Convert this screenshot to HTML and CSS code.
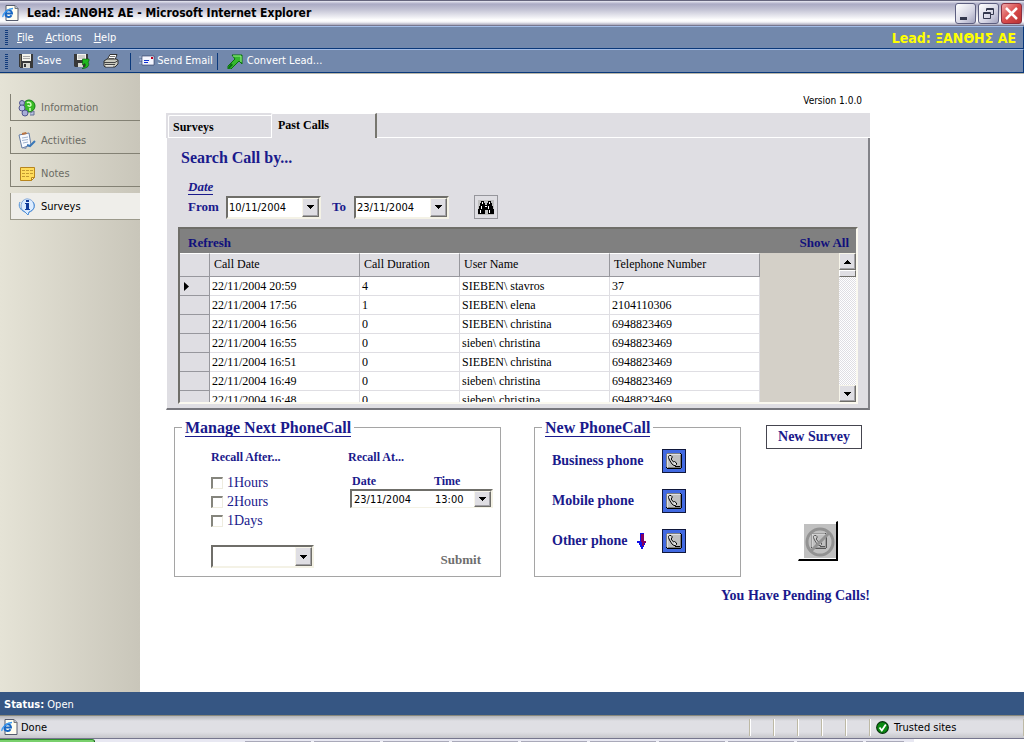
FILE: index.html
```html
<!DOCTYPE html>
<html lang="en">
<head>
<meta charset="utf-8">
<title>Lead: ΞΑΝΘΗΣ ΑΕ</title>
<link rel="stylesheet" href="styles.css">
</head>
<body>
<svg class="defs" aria-hidden="true">
  <symbol id="down" viewBox="0 0 7 4"><path d="M0 0h7v1H0zM1 1h5v1H1zM2 2h3v1H2zM3 3h1v1H3z"/></symbol>
  <symbol id="up" viewBox="0 0 7 4"><path d="M3 0h1v1H3zM2 1h3v1H2zM1 2h5v1H1zM0 3h7v1H0z"/></symbol>
  <symbol id="page-e" viewBox="0 0 17 17">
    <path d="M4 .5h9l3 3v12H4z" fill="#fffdf0" stroke="#555b6e"/><path d="M13 .5v3h3" fill="#b8c4dc" stroke="#777"/>
    <path d="M3.500 8.500h6.500a3.200 3.200 0 0 0-6.500 0 3.200 3.200 0 0 0 6 1.800" fill="none" stroke="#1766c4" stroke-width="2"/>
    <path d="M1 12C0 9 6 3.500 11 3.500" fill="none" stroke="#3d9af0" stroke-width="1.300"/>
  </symbol>
  <symbol id="phone" viewBox="0 0 16 16">
    <path d="M1 0h14v1h1v14h-1v1H1v-1H0V1h1z"/><path d="M1 1h14v14H1z" fill="#c0c0c0"/>
    <path d="M1 14V1h13" fill="none" stroke="#fff"/><path d="M2 14.500h12.500V2" fill="none" stroke="#808080"/>
    <path d="M3.500 2.500h1.500l1 1v1.500l-1 1 2.500 3 1-.5 2 1.500v1.500l-1 1H8l-2-1.500-2.500-4-1-2.500v-1zM9 13.500h5" fill="#ddd" stroke="#000"/>
  </symbol>
</svg>
<div class="window">
  <header class="titlebar">
    <svg class="app-icon" width="17" height="17"><use href="#page-e"/></svg>
    <h1>Lead: ΞΑΝΘΗΣ ΑΕ - Microsoft Internet Explorer</h1>
    <div class="caption-buttons">
      <button class="cap" aria-label="Minimize"><svg width="19" height="19"><path d="M4 13h7v3H4z" fill="#34384e"/></svg></button>
      <button class="cap" aria-label="Restore"><svg width="19" height="19" fill="none" stroke="#34384e"><path d="M7.500 7V4.500h7v6H12M7 5.500h8"/><path d="M4.500 8.500h7v6h-7zM4 9.500h8"/></svg></button>
      <button class="cap close" aria-label="Close"><svg width="19" height="19"><path d="M4 4l11 11M15 4L4 15" stroke="#fff" stroke-width="2.500"/></svg></button>
    </div>
  </header>
  <nav class="bar menubar">
    <span class="grip"></span>
    <a href="#"><u>F</u>ile</a><a href="#"><u>A</u>ctions</a><a href="#"><u>H</u>elp</a>
    <strong class="lead">Lead: ΞΑΝΘΗΣ ΑΕ</strong>
  </nav>
  <div class="bar toolbar">
    <span class="grip"></span>
    <button class="tool save"><svg width="14" height="14" shape-rendering="crispEdges"><path d="M0 0h14v14H1l-1-1z" fill="#383838"/><path d="M3 0h9v7H3z" fill="#f4f4ec"/><path d="M4 2h7v1H4zM4 4h7v1H4z" fill="#aaa"/><path d="M4 9h7v5H4z" fill="#d8d8d0"/><path d="M5 10h2v3H5z" fill="#333"/><path d="M1 1h1v12H1z" fill="#77705a"/></svg>Save</button>
    <button class="tool" aria-label="Save and close"><svg width="16" height="15"><path d="M0 0h14v13H1l-1-1z" fill="#383838"/><path d="M3 0h9v6H3z" fill="#f4f4ec"/><path d="M4 2h7M4 4h7" stroke="#aaa"/><path d="M4 9h5v4H4z" fill="#d8d8d0"/><path d="M8 14.500c3-1 4-3 3-5L8.500 11V5H15v2l-1 1c2 3 0 6.500-6 6.500z" fill="#20b820" stroke="#075b07" stroke-width=".6"/></svg></button>
    <button class="tool print" aria-label="Print"><svg width="16" height="14"><path d="M4 6l3-5.500h7L12 6z" fill="#fff" stroke="#333"/><path d="M7 2.500h5M6 4.500h5" stroke="#777"/><path d="M1 7l3-2h9l2 1v4l-3 3H2l-1-1z" fill="#c9c9bd" stroke="#333"/><path d="M1 8.500h11l3-2M2 10.500h10" stroke="#444" fill="none"/><path d="M3 12h7" stroke="#fff"/></svg></button>
    <span class="sep"></span>
    <button class="tool mail"><svg width="16" height="12"><path d="M0 2h3M1 5h2M0 8h3" stroke="#b9c7e3"/><path d="M3 1h12v9H3z" fill="#f4f6ff" stroke="#26345c" stroke-width=".6"/><path d="M5 5.500h5M5 7.500h4" stroke="#1030d0"/><path d="M12 2h2v2h-2z" fill="#c00020"/></svg>Send Email</button>
    <span class="sep"></span>
    <button class="tool convert"><svg width="16" height="15"><path d="M5 1h10v9l-3-3-8 8H1v-3l7-7z" fill="#35b82f" stroke="#08700c"/><path d="M6 2h8v6" fill="none" stroke="#9af28c"/><path d="M1 14l3-5 2 2-4 4z" fill="#087010"/></svg>Convert Lead...</button>
  </div>
  <div class="body">
    <nav class="side">
      <a href="#"><svg width="18" height="18"><circle cx="11" cy="7" r="6" fill="#38bb25" stroke="#147d18"/><path d="M9 4c1-1 4-1 4 2-1 2-3 1-3 0M12 9v3" fill="none" stroke="#d4ffc0" stroke-width="1.500"/><path d="M12 14l4-2v4h-4" fill="#b9c3df" stroke="#657094"/><circle cx="4" cy="4" r="2.500" fill="#a7add8" stroke="#51558d"/><circle cx="4" cy="9" r="3" fill="#b9bfe8" stroke="#51558d"/><circle cx="7" cy="14" r="3" fill="#a7add8" stroke="#51558d"/></svg>Information</a>
      <a href="#"><svg width="18" height="18"><path d="M1 3l10-2 2 12-9 3z" fill="#f7faff" stroke="#667da5"/><path d="M4 1l4-1 1 2-5 1z" fill="#b97544"/><path d="M4 6l6-1M4 8.500l6-1M5 11l5-1" stroke="#9fb2ce"/><path d="M9 13l3 1 5-5" fill="none" stroke="#3b78b8" stroke-width="2"/><path d="M4 16l4 1 1-2" fill="#8293b5"/></svg>Activities</a>
      <a href="#"><svg width="18" height="18"><path d="M2.500 2.500h14v10l-3 3h-11z" fill="#ffdc5b" stroke="#b7851e"/><path d="M4 5.500h11M4 8.500h11M4 11.500h8" stroke="#c39a31" stroke-dasharray="3 1"/><path d="M13.500 15.500v-3h3z" fill="#fff2a8" stroke="#b7851e"/></svg>Notes</a>
      <a href="#" class="current"><svg width="18" height="18"><path d="M9 .8a8 7 0 0 1 2 13.500L10 17l-3-3A7 7 0 0 1 9 .8z" fill="#dcecff" stroke="#87aada"/><path d="M2 4c-2 4 0 8 5 10l3 3 1-3c5-2 7-6 4-10" fill="none" stroke="#4d8fd8"/><path d="M8 2h3v2H8zM7 5h4v6h1v1H7v-1h1V6H7z" fill="#123b9a"/></svg>Surveys</a>
    </nav>
    <main>
      <p class="version">Version 1.0.0</p>
      <div class="tabs" role="tablist">
        <button role="tab" class="tab">Surveys</button>
        <button role="tab" class="tab active" aria-selected="true">Past Calls</button>
        <span class="tab-rest"></span>
      </div>
      <section class="page">
        <h2>Search Call by...</h2>
        <p class="date-title"><span>Date</span></p>
        <div class="search">
          <label for="from">From</label>
          <span class="combo"><input id="from" value="10/11/2004"><button class="drop" aria-label="Pick start date"><svg width="7" height="4"><use href="#down"/></svg></button></span>
          <label for="to" class="to">To</label>
          <span class="combo"><input id="to" value="23/11/2004"><button class="drop" aria-label="Pick end date"><svg width="7" height="4"><use href="#down"/></svg></button></span>
          <button class="find" aria-label="Search"><svg width="16" height="15" shape-rendering="crispEdges"><path d="M0 0h16v15H0z" fill="#c0c0c0"/><path d="M3 1h3v2h1v2h2V3h1V1h3v2h1v3h1v3h1v5h-6v-4H7v4H0V9h1V6h1V3h1z"/><path d="M4 2h1v2H4zM11 2h1v2h-1zM3 6h1v3H3zM2 10h1v3H2zM10 6h1v3h-1zM11 10h1v3h-1zM7 6h2v1H7z" fill="#fff"/></svg></button>
        </div>
        <div class="grid-frame">
          <div class="grid-caption"><button>Refresh</button><button>Show All</button></div>
          <div class="grid-body">
            <div class="grid-view">
            <table>
              <colgroup><col class="c-mark"><col class="c-date"><col class="c-dur"><col class="c-date"><col class="c-date"></colgroup>
              <thead><tr><th aria-label="Row"></th><th>Call Date</th><th>Call Duration</th><th>User Name</th><th>Telephone Number</th></tr></thead>
              <tbody>
                <tr><th><svg width="5" height="9"><path d="M0 0l5 4.500L0 9z"/></svg></th><td>22/11/2004 20:59</td><td>4</td><td>SIEBEN\ stavros</td><td>37</td></tr>
                <tr><th></th><td>22/11/2004 17:56</td><td>1</td><td>SIEBEN\ elena</td><td>2104110306</td></tr>
                <tr><th></th><td>22/11/2004 16:56</td><td>0</td><td>SIEBEN\ christina</td><td>6948823469</td></tr>
                <tr><th></th><td>22/11/2004 16:55</td><td>0</td><td>sieben\ christina</td><td>6948823469</td></tr>
                <tr><th></th><td>22/11/2004 16:51</td><td>0</td><td>SIEBEN\ christina</td><td>6948823469</td></tr>
                <tr><th></th><td>22/11/2004 16:49</td><td>0</td><td>sieben\ christina</td><td>6948823469</td></tr>
                <tr><th></th><td>22/11/2004 16:48</td><td>0</td><td>sieben\ christina</td><td>6948823469</td></tr>
              </tbody>
            </table>
            </div>
            <div class="scroll">
              <button class="drop" aria-label="Scroll up"><svg width="7" height="4"><use href="#up"/></svg></button>
              <span class="thumb"></span>
              <button class="drop last" aria-label="Scroll down"><svg width="7" height="4"><use href="#down"/></svg></button>
            </div>
          </div>
        </div>
      </section>
      <div class="lower">
        <fieldset class="manage">
          <legend><span>Manage Next PhoneCall</span></legend>
          <div class="after">
            <h3>Recall After...</h3>
            <label><input type="checkbox">1Hours</label>
            <label><input type="checkbox">2Hours</label>
            <label><input type="checkbox">1Days</label>
            <span class="combo choice"><select aria-label="Recall interval"><option></option></select><span class="drop"><svg width="7" height="4"><use href="#down"/></svg></span></span>
          </div>
          <div class="at">
            <h3>Recall At...</h3>
            <div class="at-labels"><label for="rdate">Date</label><label for="rtime">Time</label></div>
            <span class="combo when"><input id="rdate" value="23/11/2004"><input id="rtime" value="13:00"><button class="drop" aria-label="Pick recall date"><svg width="7" height="4"><use href="#down"/></svg></button></span>
            <button class="submit">Submit</button>
          </div>
        </fieldset>
        <fieldset class="phones">
          <legend><span>New PhoneCall</span></legend>
          <div class="phone-row"><span>Business phone</span><button class="dial" aria-label="Call business phone"><svg width="16" height="16"><use href="#phone"/></svg></button></div>
          <div class="phone-row"><span>Mobile phone</span><button class="dial" aria-label="Call mobile phone"><svg width="16" height="16"><use href="#phone"/></svg></button></div>
          <div class="phone-row"><span>Other phone</span><svg class="arrow" width="9" height="16" shape-rendering="crispEdges"><path d="M3 0h4v8h2v2H8v2H7v2H6v2H4v-2H3v-2H2v-2H0V8h3z" fill="#1010e8"/><path d="M4 1h3v7h2v2H7v3H5V9H4z" fill="#850060"/></svg><button class="dial" aria-label="Call other phone"><svg width="16" height="16"><use href="#phone"/></svg></button></div>
        </fieldset>
        <div class="actions">
          <button class="new-survey">New Survey</button>
          <button class="hangup" aria-label="End call"><svg width="32" height="34"><path d="M0 0h32v34H0z" fill="#c0c0c0"/><g opacity=".55"><use href="#phone" x="7" y="9" width="16" height="16"/></g><circle cx="16" cy="18" r="13" fill="none" stroke="#929292" stroke-width="3"/><path d="M25 9L7 27" stroke="#929292" stroke-width="3"/></svg></button>
        </div>
      </div>
      <p class="pending">You Have Pending Calls!</p>
    </main>
  </div>
  <div class="status"><b>Status:</b> Open</div>
  <footer class="ie-status">
    <svg width="17" height="17"><use href="#page-e"/></svg><span class="done">Done</span>
    <span class="pane"></span><span class="pane"></span><span class="pane"></span><span class="pane"></span><span class="pane"></span>
    <span class="pane zone"><svg width="13" height="13"><circle cx="6.500" cy="6.500" r="5.800" fill="#0b8a12" stroke="#03330a" stroke-width="1.200"/><path d="M3.500 6.500l2.300 3 4-6" fill="none" stroke="#fff" stroke-width="1.800"/></svg>Trusted sites</span>
  </footer>
  <div class="taskbar"><span class="start"></span><span class="tasks"></span><span class="desk"></span></div>
</div>
</body>
</html>
```
FILE: styles.css
```css
* { box-sizing: border-box; }
body { margin: 0; font: 11px/14px "DejaVu Sans Condensed", "DejaVu Sans", sans-serif; color: #000; background: #fff; }
p, h1, h2, h3 { margin: 0; }
button { font: inherit; color: inherit; background: none; border: 0; padding: 0; display: flex; align-items: center; justify-content: center; }
input, select { font: inherit; color: inherit; background: none; border: 0; padding: 0; margin: 0; min-width: 0; outline: 0; }
a { color: inherit; text-decoration: none; }
svg { flex: none; display: block; }
.defs { position: absolute; width: 0; height: 0; }
.window { display: flex; flex-direction: column; min-height: 100vh; }

/* Window caption */
.titlebar { display: flex; align-items: center; height: 26px; padding: 0 2px; border-top: 1px solid #65657d; border-bottom: 1px solid #77778f; background: linear-gradient(#e9e9f3 0, #aaaac4 3px, #c5c5d6 9px, #fff 19px, #f4f4f8 21px, #a8a8bc 24px); }
.titlebar h1 { margin-left: 8px; font: bold 12px/16px "DejaVu Sans Condensed", "DejaVu Sans", sans-serif; }
.caption-buttons { display: flex; gap: 2px; margin-left: auto; }
.cap { width: 21px; height: 21px; border: 1px solid #5d5f80; border-radius: 3px; background: linear-gradient(135deg, #fff, #d5d5e4 60%, #a2a3be); }
.close { border-color: #8d3040; background: linear-gradient(135deg, #f0a8a8, #d94c4c 50%, #b83434); }

/* Menu and tool bars */
.bar { display: flex; align-items: center; height: 23px; padding-left: 5px; color: #fff; background: #7288ac; border-top: 1px solid #a3bce6; border-bottom: 1px solid #0a387a; border-right: 1px solid #0a387a; }
.grip { width: 3px; height: 15px; background: repeating-linear-gradient(#123b7c 0 1px, #7288ac 1px 2px); }
.menubar a { margin-left: 9px; }
.menubar a + a { margin-left: 12px; }
.lead { margin-left: auto; padding-right: 7px; font-size: 14px; color: #ff0; }
.toolbar { height: 24px; }
.tool { gap: 4px; margin-left: 11px; }
.tool + .tool { margin-left: 13px; }
.print + .sep { margin-left: 11px; }
.sep { width: 1px; height: 17px; margin-left: 7px; background: #0a387a; }
.tool.mail { gap: 2px; margin-left: 8px; }
.mail + .sep { margin-left: 4px; }
.tool.convert { margin-left: 9px; }

.body { display: flex; flex: 1; border-top: 1px solid #b9b7a8; }
.side { flex: none; width: 140px; padding: 20px 0 0 10px; display: flex; flex-direction: column; gap: 6px; background: linear-gradient(90deg, #e5e3d6, #c9c6ba); }
.side a { display: flex; align-items: center; gap: 5px; height: 27px; padding: 2px 0 0 7px; color: #6b6b64; border-left: 1px solid #838174; border-bottom: 1px solid #838174; }
.side .current { color: #000; background: #efeeea; border-color: #9b998b; }
main { flex: 1; min-width: 0; padding: 20px 154px 0 26px; font-family: "Liberation Serif", serif; color: #1a1a8c; }
.version { padding: 0 8px 5px 0; text-align: right; font: 10px/14px "DejaVu Sans Condensed", sans-serif; color: #000; }

/* Tabs and page */
.tabs { display: flex; height: 25px; color: #000; background: #dfdee3; }
.tab { justify-content: flex-start; font-weight: bold; font-size: 12px; width: 103px; margin: 2px 0 0 2px; padding-left: 4px; border: 1px solid #fff; border-width: 1px 0 1px 1px; border-radius: 2px 0 0 0; }
.active { width: 106px; margin: 0; padding: 0 0 2px 6px; border-right: 2px solid #77766f; border-bottom: 0; }
.tab-rest { flex: 1; border-bottom: 1px solid #fff; }
.page { padding: 10px 10px 4px 11px; background: #dfdee3; border: 1px solid #fff; border-width: 0 2px 2px 1px; border-right-color: #838389; border-bottom-color: #77777d; }
h2 { padding-left: 3px; font-size: 16px; line-height: 20px; }
.date-title { padding: 11px 0 0 10px; font: italic bold 13px/16px "Liberation Serif", serif; }
.date-title span, legend span { border-bottom: 1px solid #1a1a8c; }
.search { display: flex; align-items: center; height: 24px; padding-left: 10px; font-size: 13px; font-weight: bold; }
.search label { flex: none; width: 38px; }
.search .to { width: 33px; padding-left: 11px; }
.combo { flex: none; display: flex; width: 95px; height: 23px; color: #000; background: #fff; border: 2px solid #6f6e69; border-right-color: #f4f2e6; border-bottom-color: #f4f2e6; font: 11px/14px "DejaVu Sans Condensed", sans-serif; }
.combo input { flex: 1; padding: 1px 0 0 1px; }
.drop { flex: none; width: 17px; background: #dfdee3; border: 1px solid #f7f5ea; border-right-color: #6f6e69; border-bottom-color: #6f6e69; box-shadow: inset -1px -1px #a2a1a6; display: flex; align-items: center; justify-content: center; }
.find { width: 24px; height: 24px; margin-left: 25px; border: 1px solid #96969c; }

/* Call list */
.grid-frame { margin-top: 8px; border: 2px solid #6f6e69; border-right-color: #fbf9f0; border-bottom-color: #fbf9f0; }
.grid-caption { display: flex; justify-content: space-between; align-items: center; height: 24px; padding: 3px 7px 0 8px; font-size: 13px; background: #808080; }
.grid-caption button { font-weight: bold; color: #10107c; }
.grid-body { display: flex; height: 149px; background: #d4d0c8; }
.grid-view { flex: 1; min-width: 0; overflow: auto; scrollbar-width: none; }
table { border-collapse: separate; border-spacing: 0; table-layout: fixed; width: 580px; font-size: 12px; color: #000; }
.c-mark { width: 30px; } .c-date { width: 150px; } .c-dur { width: 100px; }
th, td { padding: 0 0 0 2px; text-align: left; font-weight: normal; height: 19px; line-height: 17px; }
td { padding-top: 1px; background: #fff; border: 1px solid #dfdee3; border-width: 0 1px 1px 0; }
th { background: #dfdee3; border: 1px solid #97979d; border-width: 0 1px 1px 0; }
thead th { height: 24px; padding: 0 0 2px 4px; border-top: 1px solid #fff; }
tbody th { padding-left: 4px; }
.scroll { width: 17px; display: flex; flex-direction: column; background: repeating-conic-gradient(#fff 0 25%, #dfdee3 0 50%) 0 0 / 2px 2px; }
.scroll .drop { height: 17px; }
.scroll .last { margin-top: auto; }
.thumb { height: 7px; background: #dfdee3; border: 1px solid #fff; border-right-color: #6f6e69; border-bottom-color: #6f6e69; }

/* Call planning */
.lower { display: grid; grid-template-columns: minmax(335px, 335fr) minmax(207px, 207fr) 104px; column-gap: 25px; padding: 8px 0 0 8px; }
fieldset { min-width: 0; margin: 0; padding: 12px 8px 8px 36px; border: 1px solid #a5a5a5; }
legend { margin-left: -29px; padding: 0 3px; font-size: 16px; line-height: 19px; font-weight: bold; }
.manage { display: grid; grid-template-columns: 137px 1fr; margin-right: 8px; }
h3 { font-size: 12px; line-height: 16px; }
.after, .at { display: flex; flex-direction: column; align-items: flex-start; }
.after h3 { margin-bottom: 8px; }
.after label { display: flex; align-items: center; gap: 4px; height: 19px; font-size: 14px; }
.after input { appearance: none; width: 12px; height: 12px; background: #fff; border: 1px solid #eeecdf; border-top: 2px solid #85857d; border-left: 2px solid #85857d; }
.choice { display: grid; width: 103px; height: 23px; margin-top: 15px; }
.choice > * { grid-area: 1 / 1; }
.choice select { appearance: none; }
.choice .drop { justify-self: end; pointer-events: none; }
.at-labels { display: grid; grid-template-columns: 82px 1fr; margin-top: 9px; padding-left: 4px; font-size: 12px; line-height: 15px; font-weight: bold; }
.when { width: 143px; height: 19px; margin-left: 2px; border-bottom-width: 1px; }
.when input:first-child { flex: 0 0 82px; padding-left: 2px; }
.submit { margin: auto 12px 0 auto; font-size: 13px; line-height: 16px; font-weight: bold; color: #6e6e6e; }
.phones { padding: 12px 8px 8px 17px; }
.phones legend { margin-left: -10px; }
.phone-row { display: grid; grid-template-columns: 84px 26px 24px; align-items: center; height: 24px; margin-bottom: 16px; font-size: 14px; font-weight: bold; white-space: nowrap; }
.phone-row:last-child { margin-bottom: 14px; }
.dial { grid-column: 3; width: 24px; height: 24px; background: #4169e1; border: 1px solid #10183c; }
.phone-row span, .dial, .arrow { grid-row: 1; }
.arrow { grid-column: 2; margin-left: 1px; }
.actions { display: flex; flex-direction: column; align-items: flex-start; padding-top: 7px; }
.new-survey { width: 96px; height: 24px; border: 1px solid #45454f; font-size: 14px; font-weight: bold; }
.hangup { width: 40px; height: 40px; margin: 72px 0 0 32px; border: 1px solid #fff; border-right: 2px solid #000; border-bottom: 2px solid #000; padding-left: 4px; }
.pending { padding-top: 10px; text-align: right; font-size: 14px; line-height: 18px; font-weight: bold; }

/* Status bars */
.status { height: 23px; padding: 6px 4px 0; color: #fff; background: #365683; }
.ie-status { display: flex; align-items: center; height: 23px; padding: 1px 0 0 1px; border-top: 1px solid #88887c; background: linear-gradient(#b4b4b8, #dfdfe4 5px, #dfdfe4 16px, #c6c6cb); }
.done { margin: 0 auto 0 3px; padding-top: 1px; }
.pane { width: 24px; height: 17px; border-left: 1px solid #bdb9a5; box-shadow: inset 1px 0 #fff; }
.zone { display: flex; align-items: center; gap: 5px; width: 155px; padding-left: 6px; border-right: 1px solid #bdb9a5; }
.taskbar { display: flex; height: 4px; background: #e8e8f2; border-top: 1px solid #76768e; }
.start { width: 95px; background: #79d06c; border-top: 1px solid #2e8b2b; border-right: 1px solid #0c5c0c; border-radius: 0 3px 0 0; }
.tasks { flex: 1; margin: 2px 10px 0 150px; background: repeating-linear-gradient(90deg, #a9a9b9 0 66px, #eeeef5 66px 69px); }
.desk { width: 110px; background: #fff; }
```
